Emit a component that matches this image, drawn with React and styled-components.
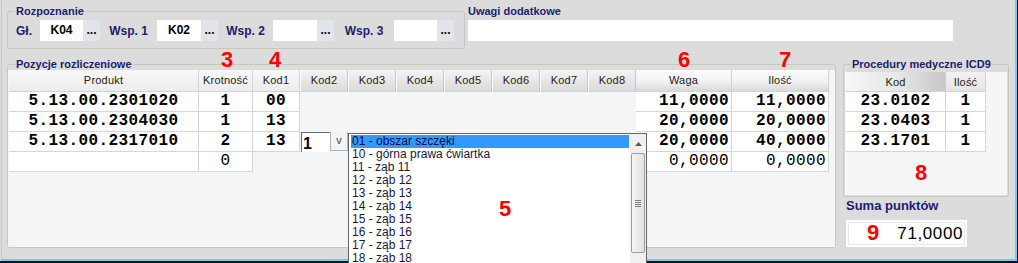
import React from 'react';
import styled, { createGlobalStyle, css } from 'styled-components';

const UI = '"Liberation Sans", Arial, sans-serif';
const MONO = '"Liberation Mono", "Courier New", monospace';
const NAVY = '#1d1d6e';

const GlobalStyle = createGlobalStyle`
  html, body { margin: 0; padding: 0; overflow: hidden; background: #dcdcdc; }
  body { font-family: ${UI}; }
  *, *::before, *::after { box-sizing: border-box; }
`;

const Window = styled.div`
  position: relative;
  width: 1018px;
  height: 263px;
  padding-left: 1px;
  background: #dcdcdc;
  border-right: 1px solid #111;
  border-bottom: 2px solid #111;
`;

const Frame = styled.div`
  height: 100%;
  padding-left: 5px;
  border-left: 1px solid #bcc6ce;
  border-right: 2px solid #7ac8ef;
  border-bottom: 2px solid #7ac8ef;
`;

const TopRow = styled.div`
  display: flex;
  align-items: flex-start;
  padding-top: 5px;
  gap: 3px;
`;

const MidRow = styled.div`
  display: flex;
  align-items: flex-start;
  margin-top: 9px;
  gap: 7px;
`;

const Group = styled.fieldset`
  flex: none;
  width: ${(p) => p.$w}px;
  margin: 0;
  padding: ${(p) => p.$pad};
  border: 1px solid #c8c8ba;
  border-radius: 3px;
  min-inline-size: 0;
`;

const Legend = styled.legend`
  margin-left: ${(p) => p.$indent}px;
  padding: 0 1px;
  font: bold 11px/12px ${UI};
  color: ${NAVY};
`;

const FieldRow = styled.div`
  display: flex;
  align-items: center;
  height: 21px;
`;

const FieldLabel = styled.span`
  flex: none;
  width: ${(p) => p.$w}px;
  text-align: ${(p) => p.$align || 'center'};
  font: bold 12px/14px ${UI};
  color: ${NAVY};
`;

const Picker = styled.div`
  flex: none;
  display: flex;
  width: ${(p) => p.$w}px;
  height: 21px;
  background: #fff;
`;

const PickerValue = styled.span`
  flex: 1;
  text-align: center;
  font: bold 12px/21px ${UI};
  color: #000;
`;

const DotsButton = styled.span`
  flex: none;
  width: 17px;
  background: #e1e5eb;
  text-align: center;
  font: bold 12px/21px ${UI};
  color: #000;
`;

const Notes = styled.div`
  flex: none;
  width: 485px;
  display: flex;
  flex-direction: column;
  gap: 3px;
`;

const NotesTitle = styled.div`
  font: bold 11px/12px ${UI};
  color: ${NAVY};
`;

const NotesInput = styled.div`
  height: 21px;
  background: #fff;
`;

const GridPanel = styled.div`
  position: relative;
  height: ${(p) => p.$h}px;
  padding-left: 1px;
  background: #f4f5f7;
`;

const HeadRow = styled.div`
  display: flex;
  height: ${(p) => p.$h}px;
`;

const headKinds = {
  plain: css`
    background: linear-gradient(#f8f8f8, #ececec);
    border-right: 1px solid #d3d3d3;
  `,
  tab: css`
    background: linear-gradient(#f4f4f4, #dadada);
    border-left: 1px solid #ffffff;
    border-right: 1px solid #c6c6c6;
  `,
  gloss: css`
    background: linear-gradient(#fcfcfc 0%, #f1f1f1 55%, #d9d9d9 100%);
    border-right: 1px solid #d0d0d0;
  `,
  sorted: css`
    background: linear-gradient(to right, #f6f6f6, #e6e6e6 55%, #c6c6c6);
    border-right: 1px solid #d0d0d0;
  `,
  soft: css`
    background: linear-gradient(#f2f2f2, #e4e4e4);
    border-right: 1px solid #d0d0d0;
  `,
};

const HeadCell = styled.div`
  flex: none;
  width: ${(p) => p.$w}px;
  border-bottom: 1px solid #d2d2d2;
  text-align: center;
  font: 11px/20px ${UI};
  letter-spacing: 0.2px;
  color: #222;
  ${(p) => headKinds[p.$kind]}
`;

const DataRow = styled.div`
  display: flex;
  height: 20px;
`;

const Cell = styled.div`
  flex: none;
  width: ${(p) => p.$w}px;
  height: 20px;
  background: #fff;
  border-right: 1px solid #d6d6d6;
  border-bottom: 1px solid #d6d6d6;
  font: ${(p) => (p.$thin ? 'normal' : 'bold')} 16px/19px ${MONO};
  letter-spacing: 0.4px;
  text-align: ${(p) => p.$align};
  padding-right: ${(p) => (p.$align === 'right' ? 2 : 0)}px;
  color: #000;
  white-space: nowrap;
`;

const Gap = styled.div`
  flex: none;
  width: ${(p) => p.$w}px;
  height: 20px;
`;

const EditorCell = styled.div`
  position: relative;
  flex: none;
  display: flex;
  width: ${(p) => p.$w}px;
  height: 20px;
  padding-left: 1px;
`;

const EditBox = styled.div`
  flex: none;
  width: 29px;
  height: 20px;
  background: #fff;
  border-top: 1px solid #6a6a6a;
  border-left: 1px solid #6a6a6a;
  padding: 3px 0 0 1px;
  font: bold 16px/16px ${UI};
  color: #000;
`;

const DropButton = styled.div`
  flex: none;
  width: 18px;
  height: 19px;
  background: #f3f3f3;
  border: 1px solid #b4b4b4;
  border-top: none;
  text-align: center;
  font: 11px/17px ${UI};
  color: #444;
`;

const DropList = styled.div`
  position: absolute;
  left: 48px;
  top: 1px;
  z-index: 5;
  display: flex;
  width: 299px;
  height: 130px;
  background: #fff;
  border: 1px solid #646464;
  border-bottom: none;
  padding: 0 0 0 1px;
`;

const Items = styled.div`
  flex: 1;
  min-width: 0;
  padding: 1px 1px 0 1px;
  overflow: hidden;
`;

const Item = styled.div`
  height: 13px;
  padding-left: 1px;
  font: 12px/13px ${UI};
  color: #1c1836;
  white-space: nowrap;
  ${(p) =>
    p.$active &&
    css`
      background: #3399ff;
      color: #0c0c3a;
    `}
`;

const ScrollBar = styled.div`
  flex: none;
  width: 16px;
  background: #f0f0f0;
  display: flex;
  flex-direction: column;
  align-items: center;
`;

const ScrollArrow = styled.div`
  width: 16px;
  height: 17px;
  display: flex;
  align-items: center;
  justify-content: center;
  padding-top: 2px;
`;

const Thumb = styled.div`
  width: 14px;
  height: 100px;
  margin-top: 2px;
  border: 1px solid #9c9c9c;
  border-radius: 2px;
  background: linear-gradient(to right, #f5f5f5, #e2e2e2);
  display: flex;
  flex-direction: column;
  align-items: center;
  justify-content: center;
  gap: 1px;
`;

const Grip = styled.div`
  width: 6px;
  height: 1px;
  background: #7c7c7c;
`;

const RightCol = styled.div`
  flex: none;
  width: 166px;
  display: flex;
  flex-direction: column;
  align-items: flex-start;
`;

const SumTitle = styled.div`
  margin: 1px 0 0 3px;
  font: bold 13px/16px ${UI};
  color: ${NAVY};
`;

const SumBox = styled.div`
  margin: 6px 0 0 3px;
  width: 121px;
  height: 27px;
  background: #fff;
  border: 2px solid #fff;
  box-shadow: inset 0 0 0 1px #e8e8e8;
  padding-right: 2px;
  text-align: right;
  font: 17px/23px ${UI};
  letter-spacing: 0.6px;
  color: #000;
`;

const Mark = styled.span`
  position: absolute;
  left: ${(p) => p.$x}px;
  top: ${(p) => p.$y}px;
  z-index: 10;
  font: bold 22px/22px ${UI};
  color: #ff0000;
`;

const COLS = [
  { key: 'prod', title: 'Produkt', w: 190, kind: 'plain', align: 'center' },
  { key: 'krot', title: 'Krotność', w: 54, kind: 'plain', align: 'center' },
  { key: 'k1', title: 'Kod1', w: 47, kind: 'plain', align: 'center' },
  ...[2, 3, 4, 5, 6, 7, 8].map((n) => ({
    key: `k${n}`,
    title: `Kod${n}`,
    w: 48,
    kind: 'tab',
    align: 'center',
  })),
  { key: 'waga', title: 'Waga', w: 96, kind: 'gloss', align: 'right' },
  { key: 'ilosc', title: 'Ilość', w: 97, kind: 'gloss', align: 'right' },
];

const ROWS = [
  { prod: '5.13.00.2301020', krot: '1', k1: '00', waga: '11,0000', ilosc: '11,0000' },
  { prod: '5.13.00.2304030', krot: '1', k1: '13', waga: '20,0000', ilosc: '20,0000' },
  { prod: '5.13.00.2317010', krot: '2', k1: '13', k2: 'edit', waga: '20,0000', ilosc: '40,0000' },
  { prod: '', krot: '0', waga: '0,0000', ilosc: '0,0000', thin: true },
];

const OPTIONS = [
  '01 - obszar szczęki',
  '10 - górna prawa ćwiartka',
  '11 - ząb 11',
  '12 - ząb 12',
  '13 - ząb 13',
  '14 - ząb 14',
  '15 - ząb 15',
  '16 - ząb 16',
  '17 - ząb 17',
  '18 - ząb 18',
];

const PROC_COLS = [
  { key: 'kod', title: 'Kod', w: 100, kind: 'sorted' },
  { key: 'il', title: 'Ilość', w: 40, kind: 'soft' },
];

const PROCS = [
  { kod: '23.0102', il: '1' },
  { kod: '23.0403', il: '1' },
  { kod: '23.1701', il: '1' },
];

function CodePicker({ w, value }) {
  return (
    <Picker $w={w}>
      <PickerValue>{value}</PickerValue>
      <DotsButton>...</DotsButton>
    </Picker>
  );
}

function CodeDropdown() {
  return (
    <DropList>
      <Items>
        {OPTIONS.map((o, i) => (
          <Item key={o} $active={i === 0}>
            {o}
          </Item>
        ))}
      </Items>
      <ScrollBar>
        <ScrollArrow>
          <svg width="7" height="4" viewBox="0 0 7 4">
            <polygon points="0,4 3.5,0 7,4" fill="#5a5a5a" />
          </svg>
        </ScrollArrow>
        <Thumb>
          <Grip />
          <Grip />
          <Grip />
          <Grip />
        </Thumb>
      </ScrollBar>
    </DropList>
  );
}

function PositionsGrid() {
  return (
    <GridPanel $h={177}>
      <HeadRow $h={22}>
        {COLS.map((c) => (
          <HeadCell key={c.key} $w={c.w} $kind={c.kind}>
            {c.title}
          </HeadCell>
        ))}
      </HeadRow>
      {ROWS.map((r, ri) => (
        <DataRow key={ri}>
          {COLS.map((c) => {
            const v = r[c.key];
            if (v === 'edit') {
              return (
                <EditorCell key={c.key} $w={c.w}>
                  <EditBox>1</EditBox>
                  <DropButton>v</DropButton>
                  <CodeDropdown />
                </EditorCell>
              );
            }
            if (v === undefined) return <Gap key={c.key} $w={c.w} />;
            return (
              <Cell key={c.key} $w={c.w} $align={c.align} $thin={r.thin}>
                {v}
              </Cell>
            );
          })}
        </DataRow>
      ))}
    </GridPanel>
  );
}

function ProceduresGrid() {
  return (
    <GridPanel $h={123}>
      <HeadRow $h={20}>
        {PROC_COLS.map((c) => (
          <HeadCell key={c.key} $w={c.w} $kind={c.kind}>
            {c.title}
          </HeadCell>
        ))}
      </HeadRow>
      {PROCS.map((r, i) => (
        <DataRow key={i}>
          {PROC_COLS.map((c) => (
            <Cell key={c.key} $w={c.w} $align="center">
              {r[c.key]}
            </Cell>
          ))}
        </DataRow>
      ))}
    </GridPanel>
  );
}

export default function App() {
  return (
    <Window>
      <GlobalStyle />
      <Frame>
        <TopRow>
          <Group $w={458} $pad="3px 8px 7px 8px">
            <Legend $indent={-1}>Rozpoznanie</Legend>
            <FieldRow>
              <FieldLabel $w={24} $align="left">Gł.</FieldLabel>
              <CodePicker w={60} value="K04" />
              <FieldLabel $w={57}>Wsp. 1</FieldLabel>
              <CodePicker w={61} value="K02" />
              <FieldLabel $w={55}>Wsp. 2</FieldLabel>
              <CodePicker w={61} value="" />
              <FieldLabel $w={60}>Wsp. 3</FieldLabel>
              <CodePicker w={60} value="" />
            </FieldRow>
          </Group>
          <Notes>
            <NotesTitle>Uwagi dodatkowe</NotesTitle>
            <NotesInput />
          </Notes>
        </TopRow>
        <MidRow>
          <Group $w={829} $pad="0">
            <Legend $indent={7}>Pozycje rozliczeniowe</Legend>
            <PositionsGrid />
          </Group>
          <RightCol>
            <Group $w={166} $pad="2px 1px 1px 1px">
              <Legend $indent={6}>Procedury medyczne ICD9</Legend>
              <ProceduresGrid />
            </Group>
            <SumTitle>Suma punktów</SumTitle>
            <SumBox>71,0000</SumBox>
          </RightCol>
        </MidRow>
      </Frame>
      <Mark $x={221} $y={49}>3</Mark>
      <Mark $x={269} $y={49}>4</Mark>
      <Mark $x={499} $y={198}>5</Mark>
      <Mark $x={678} $y={49}>6</Mark>
      <Mark $x={779} $y={49}>7</Mark>
      <Mark $x={915} $y={162}>8</Mark>
      <Mark $x={867} $y={222}>9</Mark>
    </Window>
  );
}
